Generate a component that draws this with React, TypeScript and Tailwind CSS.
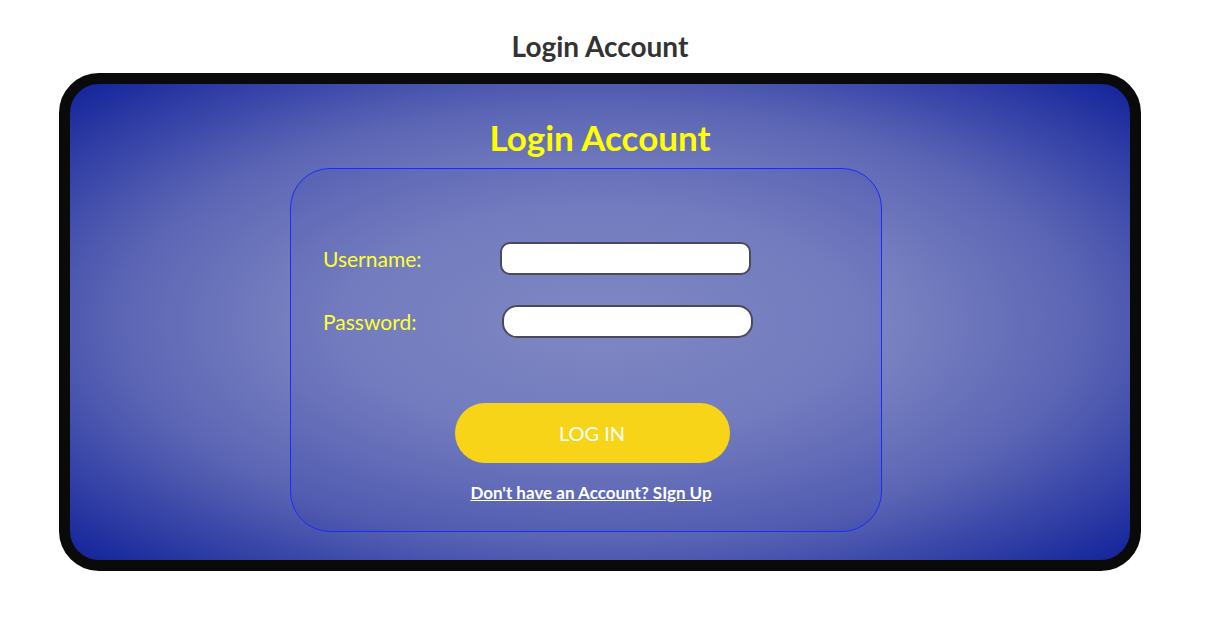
import React from 'react';

export default function App() {
  return (
    <div className="min-h-screen bg-white font-['Lato','Noto_Sans',sans-serif]">
      <div className="w-[1200px] pt-[29px]">
        {/* Page title */}
        <h1 className="text-center text-[28px] font-bold leading-[34px] text-[#333333]">
          Login Account
        </h1>

        {/* Frame */}
        <div className="mx-[59px] mt-[10px] rounded-[40px] border-[11px] border-[#0a0a0a] bg-[radial-gradient(ellipse_at_50%_50%,#8c94c8_0%,#7d86c2_35%,#5a64b4_65%,#12229a_100%)] overflow-hidden">
          <div className="h-[476px] pt-[31px]">
            <h2 className="text-center text-[35px] font-bold leading-[44px] text-[#ffff00]">
              Login Account
            </h2>

            {/* Form box */}
            <div className="ml-[220px] mt-[9px] h-[364px] w-[592px] rounded-[40px] border border-[#1a2bff] bg-[#1020a0]/10 pt-[73px]">
              <div className="flex items-center">
                <label className="w-[209px] pl-[32px] text-[21px] text-[#ffff33]">Username:</label>
                <input
                  type="text"
                  className="h-[33px] w-[251px] rounded-[10px] border-2 border-[#4a4a5a] bg-white px-2 outline-none"
                />
              </div>
              <div className="mt-[30px] flex items-center">
                <label className="w-[211px] pl-[32px] text-[21px] text-[#ffff33]">Password:</label>
                <input
                  type="password"
                  className="h-[33px] w-[251px] rounded-[15px] border-2 border-[#4a4a5a] bg-white px-2 outline-none"
                />
              </div>

              <div className="mt-[65px] flex flex-col items-center">
                <button className="ml-[12px] h-[60px] w-[275px] rounded-full bg-[#f7d417] text-[20px] text-white">
                  LOG IN
                </button>
                <a href="#" className="ml-[10px] mt-[17px] text-[17px] font-bold text-white underline">
                  Don't have an Account? SIgn Up
                </a>
              </div>
            </div>
          </div>
        </div>
      </div>
    </div>
  );
}
